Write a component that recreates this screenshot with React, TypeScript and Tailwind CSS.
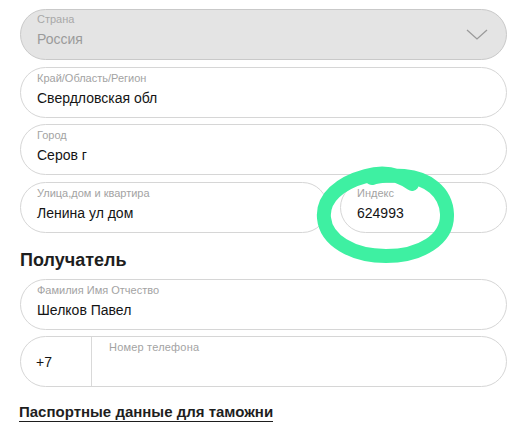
import React from "react";

const font = { fontFamily: '"Liberation Sans", Arial, sans-serif' };

function Field({ label, value, className = "" }: { label: string; value: string; className?: string }) {
  return (
    <div className={`h-[51px] rounded-full border border-[#d6d6d6] bg-white pl-[16px] pt-[4px] ${className}`}>
      <div className="text-[11px] leading-[13px] text-[#a3a3a3]">{label}</div>
      <div className="mt-[4px] text-[14px] leading-[18px] text-[#141414]">{value}</div>
    </div>
  );
}

export default function App() {
  return (
    <div className="relative h-[430px] w-[520px] overflow-hidden bg-white" style={font}>
      <div className="flex flex-col px-[20px] pr-[13px] pt-[9px]">
        <div className="flex flex-col gap-[6.5px]">
          <div className="flex h-[51px] justify-between rounded-full border border-[#c9c9c9] bg-[#e4e4e4] pl-[16px] pr-[18px] pt-[3px]">
            <div>
              <div className="text-[11px] leading-[13px] text-[#a8a8a8]">Страна</div>
              <div className="mt-[4px] text-[14px] leading-[18px] text-[#9b9b9b]">Россия</div>
            </div>
            <svg width="22" height="12" viewBox="0 0 22 12" className="mt-[16px]">
              <path d="M1 1 L11 10 L21 1" fill="none" stroke="#9a9a9a" strokeWidth="1.3" />
            </svg>
          </div>
          <Field label="Край/Область/Регион" value="Свердловская обл" />
          <Field label="Город" value="Серов г" />
          <div className="flex gap-[12px]">
            <Field label="Улица,дом и квартира" value="Ленина ул дом" className="w-[308px]" />
            <Field label="Индекс" value="624993" className="flex-1" />
          </div>
        </div>
        <div className="mt-[15px] text-[18px] font-bold leading-[24px] text-[#1e1e1e]">Получатель</div>
        <div className="mt-[7px] flex flex-col gap-[6.5px]">
          <Field label="Фамилия Имя Отчество" value="Шелков Павел" />
          <div className="flex h-[51px] rounded-full border border-[#d6d6d6] bg-white">
            <div className="flex w-[70px] items-center pl-[15px] pt-[2px] text-[14px] text-[#141414]">+7</div>
            <div className="w-px bg-[#d9d9d9]" />
            <div className="pl-[17px] pt-[4px] text-[11px] leading-[13px] tracking-[0.2px] text-[#a3a3a3]">Номер телефона</div>
          </div>
        </div>
        <div className="mt-[16px] ml-[-1px] self-start border-b-[1.5px] border-[#1e1e1e] text-[15px] font-bold leading-[18px] text-[#1e1e1e]">
          Паспортные данные для таможни
        </div>
      </div>
      <svg className="pointer-events-none absolute left-0 top-0" width="520" height="430" viewBox="0 0 520 430">
        <path
          d="M412 184 C 396 172, 380 172, 366 176 C 340 183, 322 198, 324 218 C 326 240, 352 256, 386 256 C 420 256, 448 240, 447 214 C 446 192, 428 178, 404 176 C 392 175, 378 176, 372 178"
          fill="none"
          stroke="#3ef0a2"
          strokeWidth="14"
          strokeLinecap="round"
          strokeLinejoin="round"
        />
      </svg>
    </div>
  );
}
